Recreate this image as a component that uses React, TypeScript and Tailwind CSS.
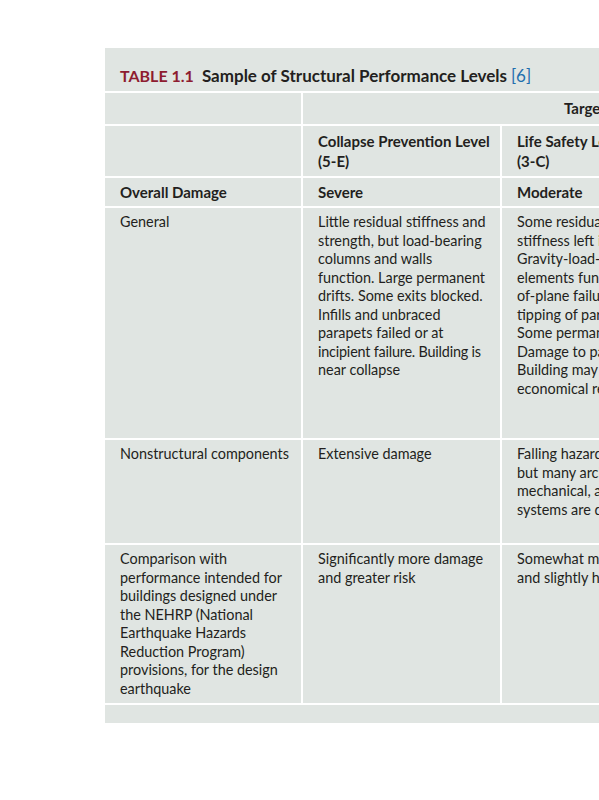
import React from "react";

const font = { fontFamily: "Lato, 'Open Sans', sans-serif" };

const cell = "bg-[#e0e5e2] pl-[15px] pr-[4px] whitespace-nowrap";
const body = cell + " pt-[5px] leading-[18.5px]";

export default function App() {
  return (
    <div className="w-[599px] h-[800px] bg-white overflow-hidden" style={font}>
      <div className="pt-[48px] pl-[105px]">
        <div className="w-[900px] bg-[#e0e5e2] text-[#231f20]">
          <div className="h-[43px] pl-[15px] pt-[18px] font-bold leading-[20px] whitespace-nowrap">
            <span className="text-[#8e1c30] text-[16px]">TABLE 1.1</span>
            <span className="ml-[8px] text-[17px]">Sample of Structural Performance Levels</span>{" "}
            <span className="text-[#1f6fae] font-normal text-[17px]">[6]</span>
          </div>
          <div className="grid grid-cols-[196px_197px_197px_197px] gap-[2px] bg-white pt-[2px] pb-[2px] text-[14.4px]">
            {/* Row 1 */}
            <div className="h-[31px] bg-[#e0e5e2]" />
            <div className="col-span-3 h-[31px] bg-[#e0e5e2] pl-[261px] flex items-center font-bold text-[15px] whitespace-nowrap">
              Target Building Performance Levels
            </div>
            {/* Row 2 */}
            <div className="h-[50px] bg-[#e0e5e2]" />
            <div className={cell + " h-[50px] pt-[5px] font-bold leading-[20px] text-[15px]"}>
              Collapse Prevention Level
              <br />
              (5-E)
            </div>
            <div className={cell + " h-[50px] pt-[5px] font-bold leading-[20px] text-[15px]"}>
              Life Safety Level
              <br />
              (3-C)
            </div>
            <div className={cell + " h-[50px] pt-[5px] font-bold leading-[20px] text-[15px]"}>
              Immediate Occupancy Level
              <br />
              (1-B)
            </div>
            {/* Row 3 */}
            <div className={cell + " h-[28px] flex items-center font-bold text-[15px]"}>Overall Damage</div>
            <div className={cell + " h-[28px] flex items-center font-bold text-[15px]"}>Severe</div>
            <div className={cell + " h-[28px] flex items-center font-bold text-[15px]"}>Moderate</div>
            <div className={cell + " h-[28px] flex items-center font-bold text-[15px]"}>Light</div>
            {/* Row 4 */}
            <div className={body + " h-[230px]"}>General</div>
            <div className={body + " h-[230px]"}>
              Little residual stiffness and
              <br />
              strength, but load-bearing
              <br />
              columns and walls
              <br />
              function. Large permanent
              <br />
              drifts. Some exits blocked.
              <br />
              Infills and unbraced
              <br />
              parapets failed or at
              <br />
              <span className="tracking-[-0.2px]">incipient failure. Building is</span>
              <br />
              near collapse
            </div>
            <div className={body + " h-[230px]"}>
              Some residual strength and
              <br />
              stiffness left in all stories.
              <br />
              Gravity-load-bearing
              <br />
              elements function. No out-
              <br />
              of-plane failure of walls or
              <br />
              tipping of parapets.
              <br />
              Some permanent drift.
              <br />
              Damage to partitions.
              <br />
              Building may be beyond
              <br />
              economical repair
            </div>
            <div className={body + " h-[230px]"}>
              No permanent drift.
              <br />
              Structure substantially
              <br />
              retains original strength
              <br />
              and stiffness.
            </div>
            {/* Row 5 */}
            <div className={body + " h-[103px]"}>Nonstructural components</div>
            <div className={body + " h-[103px]"}>Extensive damage</div>
            <div className={body + " h-[103px]"}>
              Falling hazards mitigated
              <br />
              but many architectural,
              <br />
              mechanical, and electrical
              <br />
              systems are damaged
            </div>
            <div className={body + " h-[103px]"}>
              Equipment and contents
              <br />
              are generally secure.
            </div>
            {/* Row 6 */}
            <div className={body + " h-[158px]"}>
              Comparison with
              <br />
              performance intended for
              <br />
              buildings designed under
              <br />
              the NEHRP (National
              <br />
              Earthquake Hazards
              <br />
              Reduction Program)
              <br />
              provisions, for the design
              <br />
              earthquake
            </div>
            <div className={body + " h-[158px]"}>
              Significantly more damage
              <br />
              and greater risk
            </div>
            <div className={body + " h-[158px]"}>
              Somewhat more damage
              <br />
              and slightly higher risk
            </div>
            <div className={body + " h-[158px]"}>
              Less damage and lower risk
            </div>
          </div>
          <div className="h-[18px]" />
        </div>
      </div>
    </div>
  );
}
